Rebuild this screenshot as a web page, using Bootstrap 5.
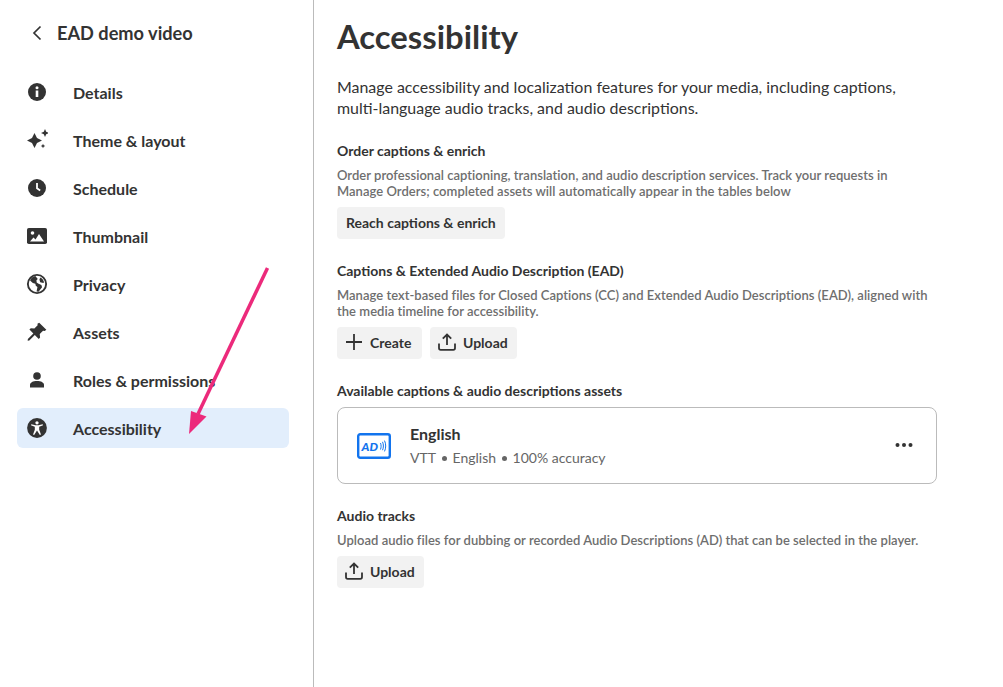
<!DOCTYPE html>
<html lang="en"><head><meta charset="utf-8"><title>Accessibility</title>
<link href="https://cdn.jsdelivr.net/npm/bootstrap@5.3.0/dist/css/bootstrap.min.css" rel="stylesheet">
<style>
html,body{height:100%;margin:0}
body{font-family:Lato,"Liberation Sans",sans-serif;color:#333;background:#fff;overflow:hidden}
.shell{height:687px;position:relative}
.side{width:314px;flex:none;border-right:1px solid #bbb;padding:17px 24px 0 17px}
.backrow{height:32px;padding-left:12px;gap:12px;font-size:18.200px;font-weight:700;margin-bottom:23px}
.backrow span{color:#333;padding-top:2px}
.menu-item{height:40px;padding-left:9px;border-radius:6px;font-size:16px;font-weight:700;color:#333;text-decoration:none;margin-bottom:8px;gap:25px}
.menu-item svg{flex:none}
.menu-item span{padding-top:2px}
.menu-item.on{background:#e2eefc}
.main{padding:0 0 0 23px;width:623px;flex:none}
.pagetitle{font-size:32.800px;font-weight:700;line-height:40px;margin:17px 0 0;color:#333}
.intro{font-size:15.950px;line-height:21px;margin:19px 0 0}
.sect{font-size:14px;font-weight:700;line-height:20px;margin:0;color:#333}
.firstsect{margin-top:23px}
.nextsect{margin-top:22px}
.hint{font-size:13px;letter-spacing:.03px;line-height:16px;font-weight:600;color:#6e6e6e;margin:6px 0 8px;max-width:595px}
.softbtn{height:32px;background:#f2f2f2;border-radius:4px;border:0;font-size:14px;font-weight:700;color:#333;padding:0 9px 2px;gap:8px}
.softbtn:hover{background:#eaeaea}
.softbtn.wideend{min-width:85px}
.softbtn.upl{padding-left:8px;gap:7px;min-width:87px}
.assetbox{height:77px;border:1px solid #bbb;border-radius:8px;padding:0 23px 0 19px;gap:19px;margin-top:6px}
.assetname{font-size:16px;font-weight:700;line-height:22px}
.assetmeta{font-size:14px;line-height:20px;color:#666;margin-top:3px}
.dotsep{display:inline-block;width:5px;height:5px;border-radius:50%;background:#666;margin:0 5.750px;vertical-align:2px}
.moredots{margin-bottom:2px}
.pointer{position:absolute;left:180px;top:260px;pointer-events:none}
</style></head><body>
<div class="shell d-flex">
<nav class="side">
<div class="backrow d-flex align-items-center">
<svg width="16" height="16" viewBox="0 0 16 16" fill="none" stroke="#333" stroke-width="1.700"><path d="M11.500 1.500 5 8l6.500 6.500"/></svg><span>EAD demo video</span></div>

<a class="menu-item d-flex align-items-center" href="#"><svg width="22" height="22" viewBox="0 0 22 22"><circle cx="11" cy="11" r="9" fill="#333"/><rect x="9.700" y="9.500" width="2.600" height="6.500" fill="#fff"/><circle cx="11" cy="6.800" r="1.500" fill="#fff"/></svg><span>Details</span></a>

<a class="menu-item d-flex align-items-center" href="#"><svg width="22" height="22" viewBox="0 0 22 22" fill="#333"><path d="M8.500 4l2.500 5 5 2.500-5 2.500-2.500 5-2.500-5-5-2.500 5-2.500z"/><path d="M19 0l1.200 2.800 2.800 1.200-2.800 1.200-1.200 2.800-1.200-2.800-2.800-1.200 2.800-1.200z"/><path d="M17 14.800l.7 1.500 1.500.7-1.500.7-.7 1.500-.7-1.500-1.500-.7 1.500-.7z"/></svg><span>Theme &amp; layout</span></a>

<a class="menu-item d-flex align-items-center" href="#"><svg width="22" height="22" viewBox="0 0 22 22"><circle cx="11" cy="11" r="9" fill="#333"/><path d="M11 6v5.300l3.200 2.200" fill="none" stroke="#fff" stroke-width="1.800"/></svg><span>Schedule</span></a>

<a class="menu-item d-flex align-items-center" href="#"><svg width="22" height="22" viewBox="0 0 22 22"><rect x="1" y="3" width="20" height="16" rx="1.800" fill="#333"/><circle cx="6.500" cy="8" r="1.800" fill="#fff"/><path d="M4 16.500l3.500-4 2 2 3.500-5.500 5 7.500z" fill="#fff"/></svg><span>Thumbnail</span></a>

<a class="menu-item d-flex align-items-center" href="#"><svg width="22" height="22" viewBox="0 0 20 20"><circle cx="10" cy="10" r="8.300" fill="#fff" stroke="#333" stroke-width="1.700"/><path d="M8.500 2.800c-2.300.5-4 2-4.800 4l2.500 2.300 2.300.6.400 1.800 1.500 1.300-.8 4 1.800.3 3.200-4.200-.6-2-3-1.400-1.300-.9-.2-2 1.200-1.200zM13 4.200l-.8 1.600.7 2.500 2.800.9.700-.8c-.5-1.900-1.800-3.400-3.400-4.200z" fill="#333"/></svg><span>Privacy</span></a>

<a class="menu-item d-flex align-items-center" href="#"><svg width="22" height="22" viewBox="0 0 20 20" fill="#333"><path d="M12 1.500l6.500 6.500-1.500 1-1.500-.2-3 3 .3 3.200-1.200 1.300-3.600-3.600-5 5-1.500.2.200-1.500 5-5-3.600-3.600 1.300-1.200 3.200.3 3-3-.2-1.500z"/></svg><span>Assets</span></a>

<a class="menu-item d-flex align-items-center" href="#"><svg width="22" height="22" viewBox="0 0 22 22" fill="#333"><circle cx="11" cy="7" r="3.800"/><path d="M4 16c0-2.500 3-4 7-4s7 1.500 7 4v2.500H4z"/></svg><span>Roles &amp; permissions</span></a>

<a class="menu-item on d-flex align-items-center" href="#"><svg width="22" height="22" viewBox="0 0 20 20"><circle cx="10" cy="10" r="9" fill="#333"/><circle cx="10" cy="5.300" r="1.500" fill="#fff"/><path d="M4.500 7.600l.4-1 3.700 1h2.800l3.700-1 .4 1-3.500 1.300v2.600l1.600 4.400-1 .4-2.600-4-2.600 4-1-.4 1.600-4.400V8.900z" fill="#fff"/></svg><span>Accessibility</span></a>
</nav>

<main class="main">
<h1 class="pagetitle">Accessibility</h1>
<p class="intro">Manage accessibility and localization features for your media, including captions, multi-language audio tracks, and audio descriptions.</p>

<section class="firstsect">
<h2 class="sect">Order captions &amp; enrich</h2>
<p class="hint">Order professional captioning, translation, and audio description services. Track your requests in Manage Orders; completed assets will automatically appear in the tables below</p>
<button class="btn softbtn d-inline-flex align-items-center" type="button">Reach captions &amp; enrich</button>
</section>

<section class="nextsect">
<h2 class="sect">Captions &amp; Extended Audio Description (EAD)</h2>
<p class="hint">Manage text-based files for Closed Captions (CC) and Extended Audio Descriptions (EAD), aligned with the media timeline for accessibility.</p>
<div class="d-flex gap-2">
<button class="btn softbtn wideend d-inline-flex align-items-center" type="button"><svg width="16" height="16" viewBox="0 0 16 16" fill="none" stroke="#333" stroke-width="1.800"><path d="M8 0v16M0 8h16"/></svg>Create</button>
<button class="btn softbtn upl d-inline-flex align-items-center" type="button"><svg width="18" height="18" viewBox="0 0 18 18" fill="none" stroke="#333" stroke-width="1.800"><path d="M9 12V1.500M4.800 5.700 9 1.500l4.200 4.200M1 10.500v4.500c0 1 .7 1.800 1.700 1.800h12.600c1 0 1.700-.8 1.700-1.800v-4.500"/></svg>Upload</button>
</div>
</section>

<section class="nextsect">
<h2 class="sect">Available captions &amp; audio descriptions assets</h2>
<div class="assetbox d-flex align-items-center">
<svg width="34" height="26" viewBox="0 0 34 26" class="flex-none"><rect x="1.200" y="1.200" width="31.600" height="23.600" rx="2" fill="#fff" stroke="#1274ee" stroke-width="2.400"/><text x="4.500" y="18" font-family="Lato,sans-serif" font-size="12" font-weight="900" font-style="italic" fill="#1274ee">AD</text><path d="M23.500 10c.8 2 .8 4.500 0 6.500M25.500 8.800c1.200 2.600 1.200 5.800 0 8.400M27.500 7.600c1.600 3.200 1.600 7.600 0 10.800" fill="none" stroke="#1274ee" stroke-width="1"/></svg>
<div class="flex-grow-1">
<div class="assetname">English</div>
<div class="assetmeta">VTT<span class="dotsep"></span>English<span class="dotsep"></span>100% accuracy</div>
</div>
<svg class="moredots" width="18" height="4" viewBox="0 0 18 4" fill="#333"><circle cx="2.500" cy="2" r="2"/><circle cx="9" cy="2" r="2"/><circle cx="15.500" cy="2" r="2"/></svg>
</div>
</section>

<section class="nextsect">
<h2 class="sect">Audio tracks</h2>
<p class="hint">Upload audio files for dubbing or recorded Audio Descriptions (AD) that can be selected in the player.</p>
<button class="btn softbtn upl d-inline-flex align-items-center" type="button"><svg width="18" height="18" viewBox="0 0 18 18" fill="none" stroke="#333" stroke-width="1.800"><path d="M9 12V1.500M4.800 5.700 9 1.500l4.200 4.200M1 10.500v4.500c0 1 .7 1.800 1.700 1.800h12.600c1 0 1.700-.8 1.700-1.800v-4.500"/></svg>Upload</button>
</section>
</main>
<svg class="pointer" width="100" height="180" viewBox="180 260 100 180"><path d="M267.500 268 198 414" stroke="#ec2a7b" stroke-width="3.500" fill="none"/><path d="M189 434l2-23 15.500 5.500z" fill="#ec2a7b"/></svg>
</div>
</body></html>
